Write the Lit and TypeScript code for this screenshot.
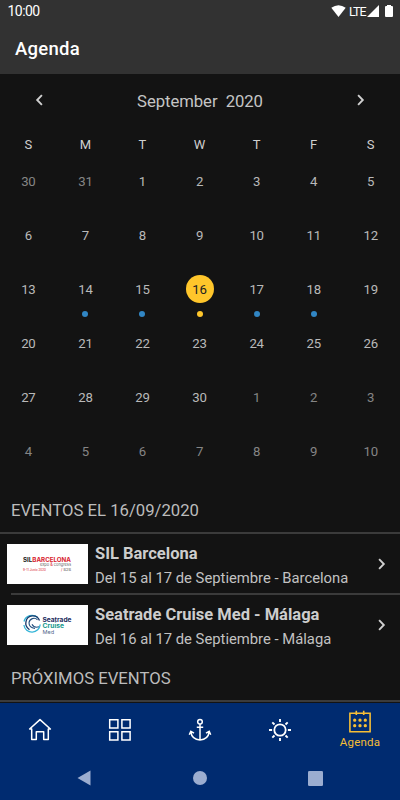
import { LitElement, html, svg, css } from "lit";
import { customElement } from "lit/decorators.js";
import { classMap } from "lit/directives/class-map.js";

interface Day { n: number; out?: boolean; event?: boolean; selected?: boolean }

const days: Day[] = [
  { n: 30, out: true }, { n: 31, out: true },
  ...Array.from({ length: 30 }, (_, i) => ({
    n: i + 1,
    event: i + 1 >= 14 && i + 1 <= 18,
    selected: i + 1 === 16,
  })),
  ...Array.from({ length: 10 }, (_, i) => ({ n: i + 1, out: true })),
];

const chevron = (left = false) => html`<svg class="chev" width="9" height="12" viewBox="0 0 9 12">
  <path d=${left ? "M6.9 1.2 2.2 6l4.7 4.8" : "M2.1 1.2 6.8 6l-4.7 4.8"} fill="none" stroke="currentColor" stroke-width="1.9"/>
</svg>`;

const icons = {
  home: svg`<path d="M3.700 12V21.500H8.300V13.700H15.700V21.500H20.300V12M3.700 12V11H1.600L12 1.600 22.400 11H20.300V12" stroke-linejoin="round"/>`,
  grid: svg`<path d="M1.7 1.7h8.2v8.2H1.7zM13.9 1.7h8.2v8.2h-8.2zM1.7 13.7h8.2v8.2H1.7zM13.9 13.7h8.2v8.2h-8.2z"/>`,
  anchor: svg`<circle cx="12" cy="3.7" r="2.3"/><path d="M12 6v16M8.800 9.200h6.400M2.9 14.200c.6 4.600 3.700 7.500 9.100 7.700 5.400-.2 8.500-3.100 9.100-7.700M1.300 16.800l1.500-3.500 3.200 1.900M22.700 16.800l-1.500-3.500-3.200 1.900"/>`,
  sun: svg`<circle cx="12" cy="12" r="5.7" stroke-width="1.8"/><path d="M12 1v3M12 20v3M1 12h3.1M19.900 12H23M4.300 4.300l2.200 2.200M17.500 17.500l2.200 2.200M19.700 4.300l-2.200 2.200M6.500 17.500l-2.200 2.200" stroke-width="1.9"/>`,
  calendar: svg`<path d="M1.900 3.300h20.200v18.500H1.900zM8.300.7v4.300M15.700.7v4.300" stroke-width="1.6"/><path d="M6.700 10.200h.01M12 10.200h.01M17.300 10.200h.01M6.700 15.700h.01M12 15.700h.01M17.300 15.700h.01" stroke-width="3.300" stroke-linecap="round"/>`,
};

@customElement("app-root")
export class AppRoot extends LitElement {
  static styles = css`
    :host { display: flex; flex-direction: column; width: 400px; height: 800px; overflow: hidden;
      background: #131313; color: #c5c5c5; font-family: Roboto, sans-serif; }
    svg { display: block; flex: none; }
    .top { height: 74px; background: #323232; color: #fff; flex: none; }
    .status { height: 22px; display: flex; align-items: center; padding: 0 7px 0 7.5px; font-size: 14px; }
    .status .time { flex: 1; letter-spacing: -.55px; }
    .status .lte { font-size: 12.5px; margin: 0 2px 0 3px; letter-spacing: -1px; width: 16px; }
    .title { margin: 0; padding: 15px 0 0 15px; font-size: 18.5px; line-height: 24px; font-weight: 500; letter-spacing: .25px; }
    .month { flex: none; height: 54px; box-sizing: border-box; display: flex; align-items: center; justify-content: space-between; padding: 0 35px 2px; }
    .month .name { font-size: 16.7px; white-space: pre; letter-spacing: -.06px; padding-top: 2px; }
    .chev { color: #d0d0d0; }
    .grid { flex: none; display: grid; grid-template-columns: repeat(7, 57.07px); text-align: center; margin-left: -.2px; }
    .week { height: 33px; font-size: 13px; line-height: 33px; color: #cfcfcf; }
    .days { grid-auto-rows: 54px; font-size: 13.2px; letter-spacing: -.2px; }
    .day { display: flex; flex-direction: column; align-items: center; padding-top: 6px; color: #b9b9b9; }
    .day.out { color: #858585; }
    .num { width: 28px; height: 28px; line-height: 29px; border-radius: 50%; }
    .selected .num { background: #ffc62b; color: #222; }
    .dot { width: 6px; height: 6px; border-radius: 50%; margin-top: 8px; background: #3186c4; }
    .selected .dot { background: #ffc62b; }
    .heading { flex: none; margin: 0; padding-left: 11px; font-size: 16.7px; font-weight: 400; height: 49px; line-height: 51px;
      border-bottom: 2px solid #3b3b3b; box-sizing: border-box; color: #bcbcbc; }
    .heading.next { height: 47px; line-height: 47px; margin-bottom: 1px; }
    .event { flex: none; height: 59px; box-sizing: border-box; display: flex; align-items: center; padding: 1px 14px 0 7px; }
    .rule { flex: none; height: 2px; margin-left: 11px; background: #3b3b3b; }
    .rule + .event { height: 60px; padding-top: 0; }
    .info { flex: 1; padding: 4px 0 0 7px; white-space: nowrap; }
    .info b { display: block; font-size: 16.5px; line-height: 25px; font-weight: 700; color: #cdcdcd; }
    .info span { display: block; font-size: 14.8px; line-height: 25px; color: #c2c2c2; }
    .tabs { flex: none; height: 54px; display: grid; grid-template-columns: repeat(5, 80px); background: #002b70; color: #fff; }
    .tab { display: flex; flex-direction: column; align-items: center; justify-content: center; }
    .tab.active { color: #f6be36; font-size: 11.5px; letter-spacing: .22px; line-height: 14px; justify-content: flex-start; padding-top: 7px; }
    .tab.active svg { margin-bottom: 1px; }
    .system { flex: 1; background: #002b70; display: flex; align-items: center; justify-content: space-between; padding: 0 77px 1px; fill: #9badd0; }
  `;

  render() {
    return html`
      <header class="top">
        <div class="status">
          <span class="time">10:00</span>
          <svg width="15" height="12" viewBox="0 0 15 12"><path d="M.3 2.8Q7.5-2.3 14.7 2.8L7.5 11.9Z" fill="#fff"/></svg>
          <span class="lte">LTE</span>
          <svg width="12" height="12" viewBox="0 0 12 12"><path d="M0 12 12 0V12Z" fill="#fff"/></svg>
          <svg width="14" height="12" viewBox="0 0 14 12"><path d="M8 1V0h4v1h1q1 0 1 1v9q0 1-1 1H7q-1 0-1-1V2q0-1 1-1Z" fill="#fff"/></svg>
        </div>
        <h1 class="title">Agenda</h1>
      </header>
      <div class="month">${chevron(true)}<span class="name">September  2020</span>${chevron()}</div>
      <div class="grid week">${["S", "M", "T", "W", "T", "F", "S"].map((d) => html`<span>${d}</span>`)}</div>
      <div class="grid days">
        ${days.map((d) => html`<div class="day ${classMap({ out: !!d.out, selected: !!d.selected })}">
          <span class="num">${d.n}</span>${d.event ? html`<i class="dot"></i>` : ""}
        </div>`)}
      </div>
      <h2 class="heading">EVENTOS EL 16/09/2020</h2>
      ${this.event(this.silLogo(), "SIL Barcelona", "Del 15 al 17 de Septiembre - Barcelona")}
      <div class="rule"></div>
      ${this.event(this.seatradeLogo(), "Seatrade Cruise Med - Málaga", "Del 16 al 17 de Septiembre - Málaga")}
      <h2 class="heading next">PRÓXIMOS EVENTOS</h2>
      <nav class="tabs">
        ${this.tab("home")}${this.tab("grid")}${this.tab("anchor")}${this.tab("sun")}${this.tab("calendar", "Agenda")}
      </nav>
      <div class="system">
        <svg width="14" height="16" viewBox="0 0 14 16"><path d="M13.5.5v15L.5 8Z"/></svg>
        <svg width="14" height="14" viewBox="0 0 14 14"><circle cx="7" cy="7" r="7"/></svg>
        <svg width="15" height="15" viewBox="0 0 15 15"><rect width="15" height="15" rx="1.3"/></svg>
      </div>`;
  }

  private event(logo: unknown, name: string, when: string) {
    return html`<article class="event">${logo}<div class="info"><b>${name}</b><span>${when}</span></div>${chevron()}</article>`;
  }

  private tab(icon: keyof typeof icons, label = "") {
    return html`<div class="tab ${classMap({ active: !!label })}">
      <svg width="24" height="24" viewBox="0 0 24 24" fill="none" stroke="currentColor" stroke-width="1.5">${icons[icon]}</svg>${label}
    </div>`;
  }

  private silLogo() {
    return html`<svg width="81" height="40" viewBox="0 0 81 40" font-family="Inter, sans-serif">
      <rect width="81" height="40" fill="#fff"/>
      <text x="16" y="17.7" font-size="5.9" font-weight="700" textLength="48" lengthAdjust="spacingAndGlyphs" fill="#d8232e"><tspan fill="#222">SIL</tspan>BARCELONA</text>
      <text x="33" y="22.3" font-size="4.2" textLength="31" lengthAdjust="spacingAndGlyphs" fill="#666">expo <tspan fill="#d8232e">&amp;</tspan> congress</text>
      <text x="16" y="26.5" font-size="3.6" textLength="23" lengthAdjust="spacingAndGlyphs" fill="#d8232e">9-11 Junio 2020</text>
      <text x="54" y="26.8" font-size="4" textLength="10" lengthAdjust="spacingAndGlyphs" fill="#555"><tspan fill="#d8232e">/</tspan> B2B</text>
    </svg>`;
  }

  private seatradeLogo() {
    return html`<svg width="81" height="40" viewBox="0 0 81 40" font-family="Inter, sans-serif">
      <rect width="81" height="40" fill="#fff"/>
      <g fill="none">
        <path d="M30.5 12.600A8.200 8.200 0 0 0 17 16.500M16.900 20A8.200 8.200 0 0 0 33.200 19.500" stroke="#35b5d8" stroke-width="1.300"/>
        <path d="M32.500 15.500A7 7 0 0 0 19 16.600Q17.800 21.500 22.500 24.700" stroke="#17396b" stroke-width="1.300"/>
        <path d="M30.500 14.800A5 5 0 0 0 22 17.800Q22 22.800 28 23.500M32 21.800Q27 23.300 25 19.300" stroke="#24507f" stroke-width="1.100"/>
      </g>
      <text x="35.500" y="16.500" font-size="5.900" font-weight="700" textLength="29" lengthAdjust="spacingAndGlyphs" fill="#1b2c60">Seatrade</text>
      <text x="35.500" y="22.900" font-size="5.900" font-weight="700" textLength="21.500" lengthAdjust="spacingAndGlyphs" fill="#14988c">Cruise</text>
      <text x="35.500" y="29" font-size="5.400" textLength="11.500" lengthAdjust="spacingAndGlyphs" fill="#4d6289">Med</text>
    </svg>`;
  }
}
